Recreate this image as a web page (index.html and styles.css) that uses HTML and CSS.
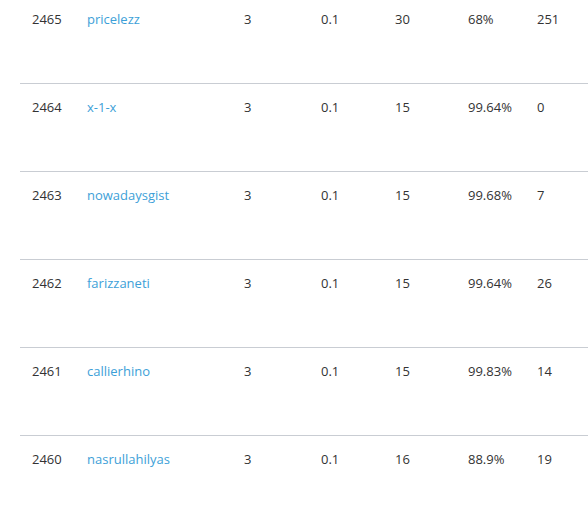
FILE: index.html
```html
<!DOCTYPE html>
<html>
<head>
<meta charset="utf-8">
<link rel="stylesheet" href="styles.css">
</head>
<body>
<div class="table">
  <div class="row"><span>2465</span><a href="#">pricelezz</a><span>3</span><span>0.1</span><span>30</span><span>68%</span><span>251</span></div>
  <div class="row"><span>2464</span><a href="#">x-1-x</a><span>3</span><span>0.1</span><span>15</span><span>99.64%</span><span>0</span></div>
  <div class="row"><span>2463</span><a href="#">nowadaysgist</a><span>3</span><span>0.1</span><span>15</span><span>99.68%</span><span>7</span></div>
  <div class="row"><span>2462</span><a href="#">farizzaneti</a><span>3</span><span>0.1</span><span>15</span><span>99.64%</span><span>26</span></div>
  <div class="row"><span>2461</span><a href="#">callierhino</a><span>3</span><span>0.1</span><span>15</span><span>99.83%</span><span>14</span></div>
  <div class="row"><span>2460</span><a href="#">nasrullahilyas</a><span>3</span><span>0.1</span><span>16</span><span>88.9%</span><span>19</span></div>
</div>
</body>
</html>
```
FILE: styles.css
```css
html, body {
  margin: 0;
  padding: 0;
  background: #fff;
  overflow: hidden;
}
body {
  font-family: "Open Sans", "Noto Sans", sans-serif;
  font-size: 13px;
  color: #333;
}
.table {
  margin-top: -4px;
  margin-left: 20px;
}
.row {
  display: grid;
  grid-template-columns: 55px 157px 77px 74px 73px 69px 1fr;
  padding: 13px 0 0 12px;
  height: 74px;
  line-height: 20px;
  border-bottom: 1px solid #c9cdd3;
}
.row a {
  color: #3d9fd8;
  text-decoration: none;
}
```
